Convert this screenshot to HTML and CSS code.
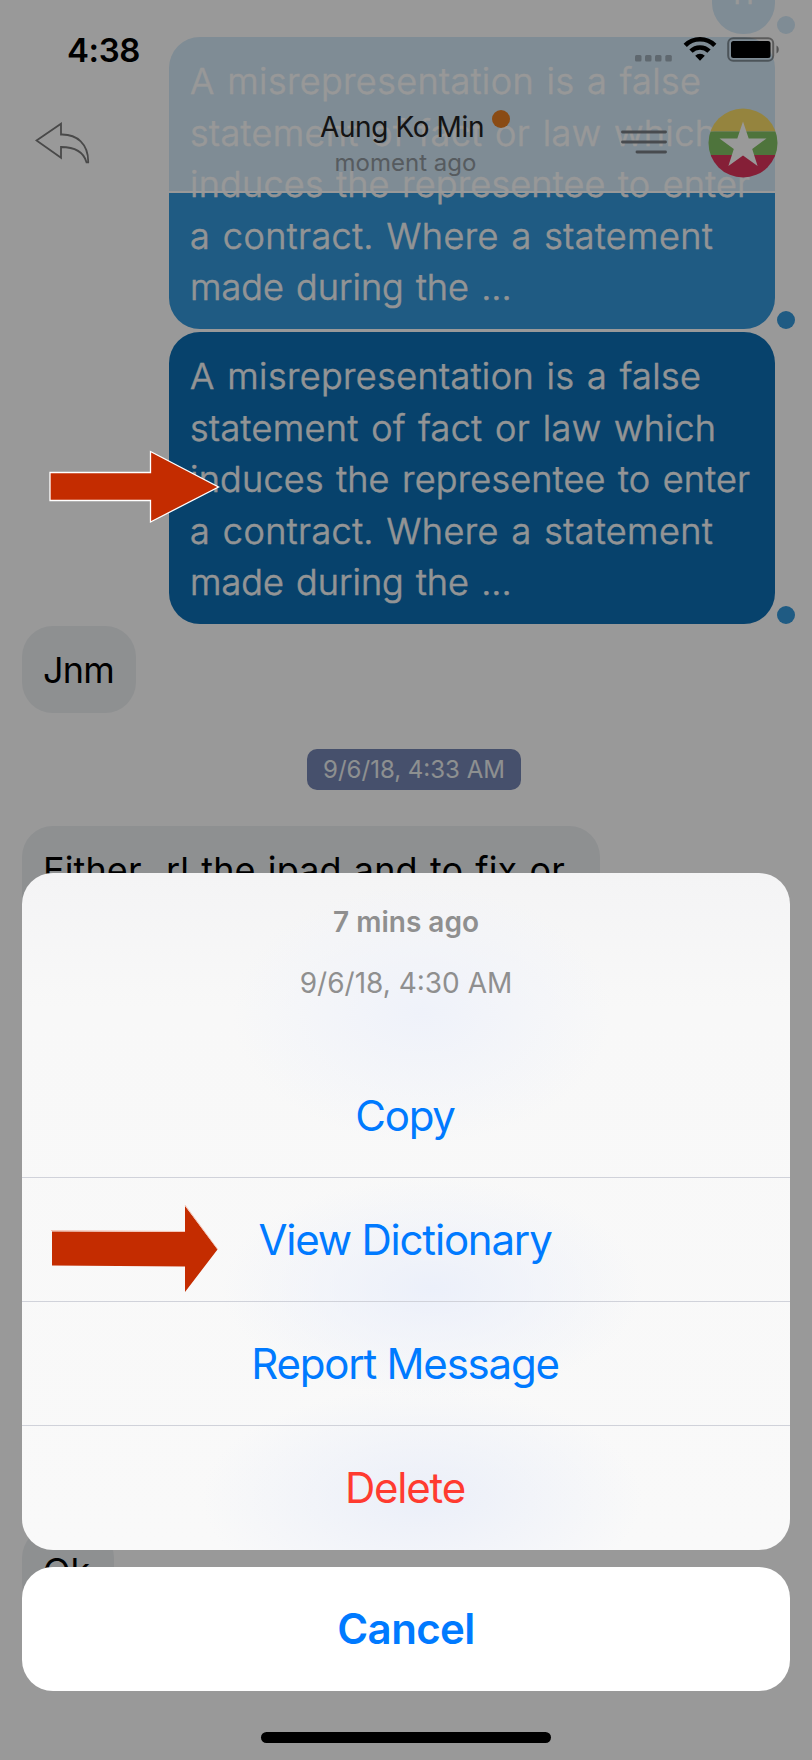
FILE: index.html
```html
<!DOCTYPE html>
<html lang="en">
<head>
<meta charset="utf-8">
<title>Chat</title>
<link rel="stylesheet" href="styles.css">
</head>
<body>
<div class="phone">
  <main class="chat">
    <div class="msg out"><div class="bubble blue short">n</div><span class="dot"></span></div>
    <div class="msg out"><div class="bubble blue"><p class="l1">A misrepresentation is a false</p><p class="l2">statement of fact or law which</p><p class="l3">induces the representee to enter</p><p class="l4">a contract. Where a statement</p><p class="l5">made during the ...</p></div><span class="dot"></span></div>
    <div class="msg out"><div class="bubble blue selected"><p class="l1">A misrepresentation is a false</p><p class="l2">statement of fact or law which</p><p class="l3">induces the representee to enter</p><p class="l4">a contract. Where a statement</p><p class="l5">made during the ...</p></div><span class="dot"></span></div>
    <div class="msg"><div class="bubble grey jnm">Jnm</div></div>
    <div class="stamp"><span>9/6/18, 4:33 AM</span></div>
    <div class="msg"><div class="bubble grey long"><p class="either">Either&nbsp; rl the ipad and to fix or</p></div></div>
    <div class="msg"><div class="bubble grey ok">Ok</div></div>
  </main>

  <header class="top">
    <div class="status">
      <span class="clock">4:38</span>
      <svg class="signal" width="38" height="8" viewBox="0 0 38 8"><g fill="#000" opacity=".25"><rect width="6.5" height="6.5" rx="1.5"/><rect x="10" width="6.5" height="6.5" rx="1.5"/><rect x="20" width="6.5" height="6.5" rx="1.5"/><rect x="30.300" width="6.5" height="6.5" rx="1.5"/></g></svg>
      <svg class="wifi" width="34" height="26" viewBox="0 0 34 26"><g fill="none" stroke="#000" stroke-width="4.6"><path d="M2.200 9.300a21 21 0 0 1 29.600 0"/><path d="M8 15.200a12.700 12.700 0 0 1 18 0"/></g><path d="M17 24.700l-4.800-4.900a6.800 6.800 0 0 1 9.600 0z"/></svg>
      <svg class="battery" width="54" height="26" viewBox="0 0 54 26"><rect x="1.200" y="1.200" width="45" height="22.600" rx="5" fill="none" stroke="#000" stroke-opacity=".4" stroke-width="2"/><rect x="4" y="4" width="39.500" height="17" rx="2.500"/><path d="M49.500 8.500c3 1.300 3 6.700 0 8z" opacity=".45"/></svg>
    </div>
    <nav class="bar">
      <svg class="back" width="56" height="42" viewBox="0 0 56 42"><path d="M1.500 18.500L26 1.700V12.500C42 12 53.500 22 53.200 40.300H51.500C48.500 29.500 40 25 26 25V35.800Z" fill="none" stroke="#7a7a7a" stroke-width="1.800"/></svg>
      <div class="who"><div class="name">Aung Ko Min<i class="presence"></i></div><div class="seen">moment ago</div></div>
      <svg class="menu" width="46" height="24" viewBox="0 0 46 24"><path d="M1.500 2h43M1.500 12h43M16 22h28.500" stroke="#787e84" stroke-width="2.900" stroke-linecap="round"/></svg>
      <svg class="flag" width="70" height="70" viewBox="0 0 70 70"><clipPath id="disc"><circle cx="35" cy="35" r="34.500"/></clipPath><g clip-path="url(#disc)"><path fill="#f8dd68" d="M0 0h70v23.500H0z"/><path fill="#82c264" d="M0 23.500h70v23.500H0z"/><path fill="#de345c" d="M0 47h70v23H0z"/></g><path fill="#fff" d="M35 13.500L40.700 30.500H58.500L44.200 41L49.600 58L35 47.500L20.400 58L25.800 41L11.500 30.500H29.300Z"/></svg>
    </nav>
  </header>

  <div class="dim"></div>

  <section class="sheet">
    <div class="actions">
      <div class="info"><strong>7 mins ago</strong><span>9/6/18, 4:30 AM</span></div>
      <div class="action copy">Copy</div>
      <div class="action view">View Dictionary</div>
      <div class="action report">Report Message</div>
      <div class="action delete">Delete</div>
    </div>
    <div class="cancel">Cancel</div>
    <div class="home"></div>
  </section>

  <svg class="arrow first" width="172" height="74" viewBox="0 0 172 74"><path d="M1 22.500H101.500V1.500L169.500 37L101.500 72V50.500H1Z" fill="#c42c00" stroke="#fff" stroke-width="1.300"/></svg>
  <svg class="arrow second" width="170" height="90" viewBox="0 0 170 90"><path d="M1 26.500L134 27V1L166.500 44.500L134 87V61.500L1 60.500Z" fill="#c42c00"/><path d="M0 25.500L134 26.500M134 0L166.500 44" stroke="#f3b9a8" stroke-width=".8"/></svg>
</div>
</body>
</html>
```
FILE: styles.css
```css
* { box-sizing: border-box; }
body { margin: 0; background: #fff; font-family: Inter, "Liberation Sans", sans-serif; }
p { margin: 0; white-space: nowrap; }
svg { display: block; flex: none; }
.phone { position: relative; width: 812px; height: 1760px; overflow: hidden; background: #fff; }

/* conversation */
.chat { display: flex; flex-direction: column; gap: 3px; margin-top: -53px; padding: 0 17px 0 22px; }
.msg { display: flex; align-items: flex-end; gap: 2px; }
.msg.out { justify-content: flex-end; }
.bubble { min-height: 87px; padding: 19px 21px 15px; border-radius: 31px; font-size: 36px; font-weight: 300; line-height: 51.6px; word-spacing: 2px; white-space: nowrap; }
.blue { width: 606px; height: 292px; color: #f5f7f8; background: #3498db; -webkit-text-stroke: .6px #f5f7f8; }
.blue.short { width: 63px; height: 87px; }
.blue.selected { background: #0d6fb5; }
.grey { padding-left: 21px; color: #000; background: #edf0f2; font-weight: 400; }
.l1 { letter-spacing: .43px; }
.l2 { letter-spacing: .42px; }
.l3 { letter-spacing: .25px; }
.l4 { letter-spacing: .45px; }
.l5 { letter-spacing: .05px; }
.either { letter-spacing: .1px; }
.dot { width: 18px; height: 18px; border-radius: 50%; background: #3498db; }
.jnm { width: 114px; margin-top: -1px; height: 87px; letter-spacing: -.8px; }
.stamp { display: flex; justify-content: center; margin: 33px 0 33px 11px; }
.stamp span { width: 214px; height: 41px; border-radius: 10px; background: #7685b4; color: #ecf0f1; text-align: center; font-size: 24px; line-height: 41px; }
.long { width: 578px; height: 698px; }
.ok { width: 92px; }

/* header */
.top { position: absolute; inset: 0 0 auto; height: 193px; background: rgba(255,255,255,.79); border-bottom: 2px solid #fff; padding: 36px 33px 0 35px; }
.status { display: flex; height: 28px; padding-left: 32px; }
.clock { flex: 1; font-size: 33px; font-weight: 600; line-height: 28px; letter-spacing: -.4px; }
.signal { margin: 19px 10px 0 0; }
.wifi { margin-right: 10px; }
.battery { margin: 1px -2px 0 0; }
.bar { display: flex; padding-top: 44px; }
.back { margin-top: 14px; }
.who { width: 300px; margin: 2px 0 0 161px; text-align: center; color: #222; }
.name { position: relative; font-size: 28px; line-height: 34px; letter-spacing: -.4px; }
.presence { position: absolute; left: 240px; top: 0; width: 18px; height: 18px; border-radius: 50%; background: #e67e22; }
.seen { padding-left: 7px; font-size: 24px; line-height: 38px; color: #90989f; }
.menu { margin: 22px 41px 0 auto; }
.flag { margin-right: 1px; }

.dim { position: absolute; inset: 0; background: rgba(0,0,0,.4); }

/* action sheet */
.sheet { position: absolute; top: 873px; left: 22px; right: 22px; display: flex; flex-direction: column; gap: 17px; }
.actions { height: 677px; border-radius: 31px; overflow: hidden; background:
  radial-gradient(ellipse 190px 130px at 400px 140px, #eff2fa, transparent),
  radial-gradient(ellipse 210px 110px at 410px 415px, #ecf0fa, transparent),
  radial-gradient(ellipse 220px 110px at 400px 625px, #ebeff9, transparent),
  linear-gradient(#f4f4f5, #f8f8f8 20%, #f9f9f9); }
.info { display: flex; flex-direction: column; align-items: center; gap: 30px; height: 181px; padding-top: 34px; color: #8f8f8f; font-size: 28px; line-height: 31px; }
.info strong { font-weight: 600; }
.action { height: 124px; padding-right: 2px; text-align: center; font-size: 42px; line-height: 124px; letter-spacing: -1.2px; color: #007aff; border-bottom: 1px solid #d0d2da; }
.delete { color: #ff3b30; border: 0; }
.cancel { height: 124px; border-radius: 31px; background: #fff; text-align: center; font-size: 42px; font-weight: 600; line-height: 124px; letter-spacing: -.6px; color: #007aff; }
.home { width: 290px; height: 11px; margin: 24px auto 0; border-radius: 6px; background: #000; }

.arrow { position: absolute; }
.first { left: 49px; top: 450px; }
.second { left: 51px; top: 1205px; }
```
